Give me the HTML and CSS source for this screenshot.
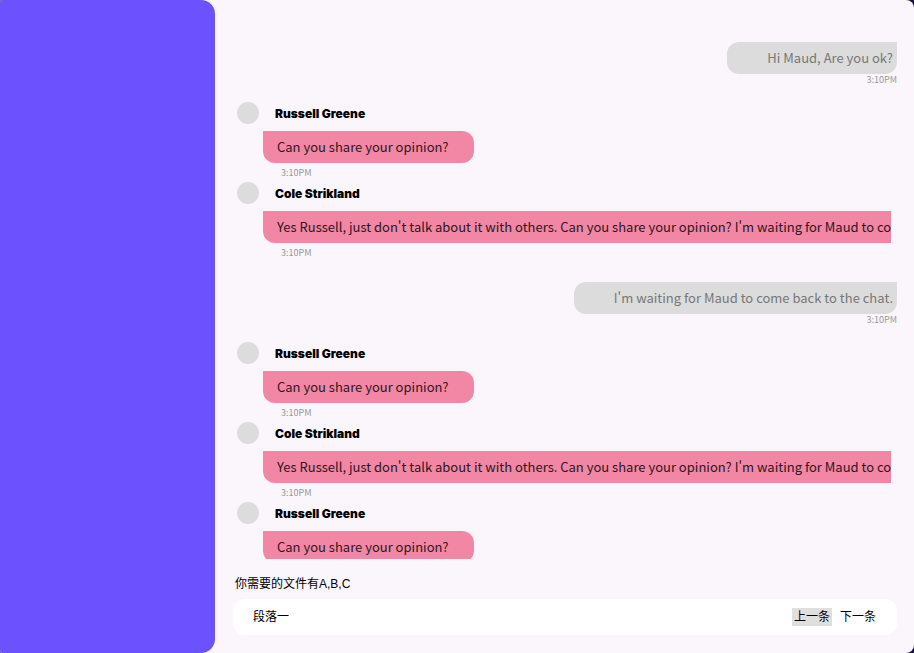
FILE: index.html
```html
<!DOCTYPE html>
<html lang="zh">
<head>
<meta charset="utf-8">
<title>Chat</title>
<link rel="stylesheet" href="styles.css">
</head>
<body>
<div class="window">
  <aside class="sidebar"></aside>
  <main class="chat">
    <section class="feed">
      <article class="message sent">
        <p class="bubble">Hi Maud, Are you ok?</p>
        <time class="time">3:10PM</time>
      </article>
      <article class="message received">
        <header class="sender"><span class="avatar"></span><h2 class="name">Russell Greene</h2></header>
        <p class="bubble">Can you share your opinion?</p>
        <time class="time">3:10PM</time>
      </article>
      <article class="message received">
        <header class="sender"><span class="avatar"></span><h2 class="name">Cole Strikland</h2></header>
        <p class="bubble">Yes Russell, just don't talk about it with others. Can you share your opinion? I'm waiting for Maud to come</p>
        <time class="time">3:10PM</time>
      </article>
      <article class="message sent">
        <p class="bubble">I'm waiting for Maud to come back to the chat.</p>
        <time class="time">3:10PM</time>
      </article>
      <article class="message received">
        <header class="sender"><span class="avatar"></span><h2 class="name">Russell Greene</h2></header>
        <p class="bubble">Can you share your opinion?</p>
        <time class="time">3:10PM</time>
      </article>
      <article class="message received">
        <header class="sender"><span class="avatar"></span><h2 class="name">Cole Strikland</h2></header>
        <p class="bubble">Yes Russell, just don't talk about it with others. Can you share your opinion? I'm waiting for Maud to come</p>
        <time class="time">3:10PM</time>
      </article>
      <article class="message received">
        <header class="sender"><span class="avatar"></span><h2 class="name">Russell Greene</h2></header>
        <p class="bubble">Can you share your opinion?</p>
      </article>
    </section>
    <footer class="composer">
      <label class="hint" for="reply">你需要的文件有A,B,C</label>
      <div class="bar">
        <input class="field" id="reply" type="text" value="段落一">
        <button class="step active" type="button">上一条</button>
        <button class="step" type="button">下一条</button>
      </div>
    </footer>
  </main>
</div>
</body>
</html>
```

FILE: styles.css
```css
* {
  box-sizing: border-box;
}

body {
  margin: 0;
  background: #1c1440;
  font: 12px/16px "Liberation Sans", "Noto Sans CJK SC", sans-serif;
  color: #000;
}

h2,
p {
  margin: 0;
}

.window {
  display: flex;
  height: 100vh;
  overflow: hidden;
  border-radius: 2px 8px 8px 2px;
  background: #faf6fc;
}

.sidebar {
  flex: 0 0 215px;
  border-radius: 2px 14px 14px 2px;
  background: #6c52ff;
}

.chat {
  display: flex;
  flex: 1;
  flex-direction: column;
  min-width: 0;
  padding: 0 17px 18px 18px;
}

.feed {
  flex: 1;
  min-height: 0;
  padding-top: 22px;
  overflow: hidden;
}

.message {
  display: flex;
  flex-direction: column;
  height: 80px;
}

.sent {
  align-items: flex-end;
  padding-top: 20px;
}

.received {
  align-items: flex-start;
  margin-right: 6px;
  padding-left: 4px;
  overflow: hidden;
}

.sender {
  display: flex;
  align-items: center;
  gap: 16px;
  height: 22px;
}

.avatar {
  width: 22px;
  height: 22px;
  border-radius: 50%;
  background: #dcdcdc;
}

.name {
  padding-top: 2px;
  font: 900 12px/16px Inter, sans-serif;
}

.bubble {
  flex: none;
  height: 32px;
  font: 13px/32px "Noto Sans CJK SC", sans-serif;
  white-space: nowrap;
}

.sent .bubble {
  padding: 0 4px 0 40px;
  border-radius: 12px 0 12px 12px;
  background: #dcdcdc;
  color: #777;
}

.received .bubble {
  margin: 7px 0 0 26px;
  padding: 0 25px 0 14px;
  border-radius: 0 12px 12px 12px;
  background: #f286a5;
  color: #2c1820;
}

.time {
  font: 9px/12px "Noto Sans CJK SC", sans-serif;
  color: #999;
}

.received .time {
  margin: 4px 0 0 44px;
}

.composer {
  display: flex;
  flex-direction: column;
  gap: 7px;
  padding-top: 17px;
}

.hint {
  padding-left: 2px;
}

.bar {
  display: flex;
  align-items: center;
  gap: 6px;
  height: 36px;
  padding: 0 19px 0 20px;
  border-radius: 12px;
  background: #fff;
}

.field {
  flex: 1;
  min-width: 0;
  padding: 0;
  border: 0;
  outline: 0;
  background: none;
  font: inherit;
  color: inherit;
}

.step {
  height: 18px;
  padding: 0 2px;
  border: 0;
  background: none;
  font: inherit;
  color: inherit;
}

.active {
  background: #dfdfdf;
}
```
